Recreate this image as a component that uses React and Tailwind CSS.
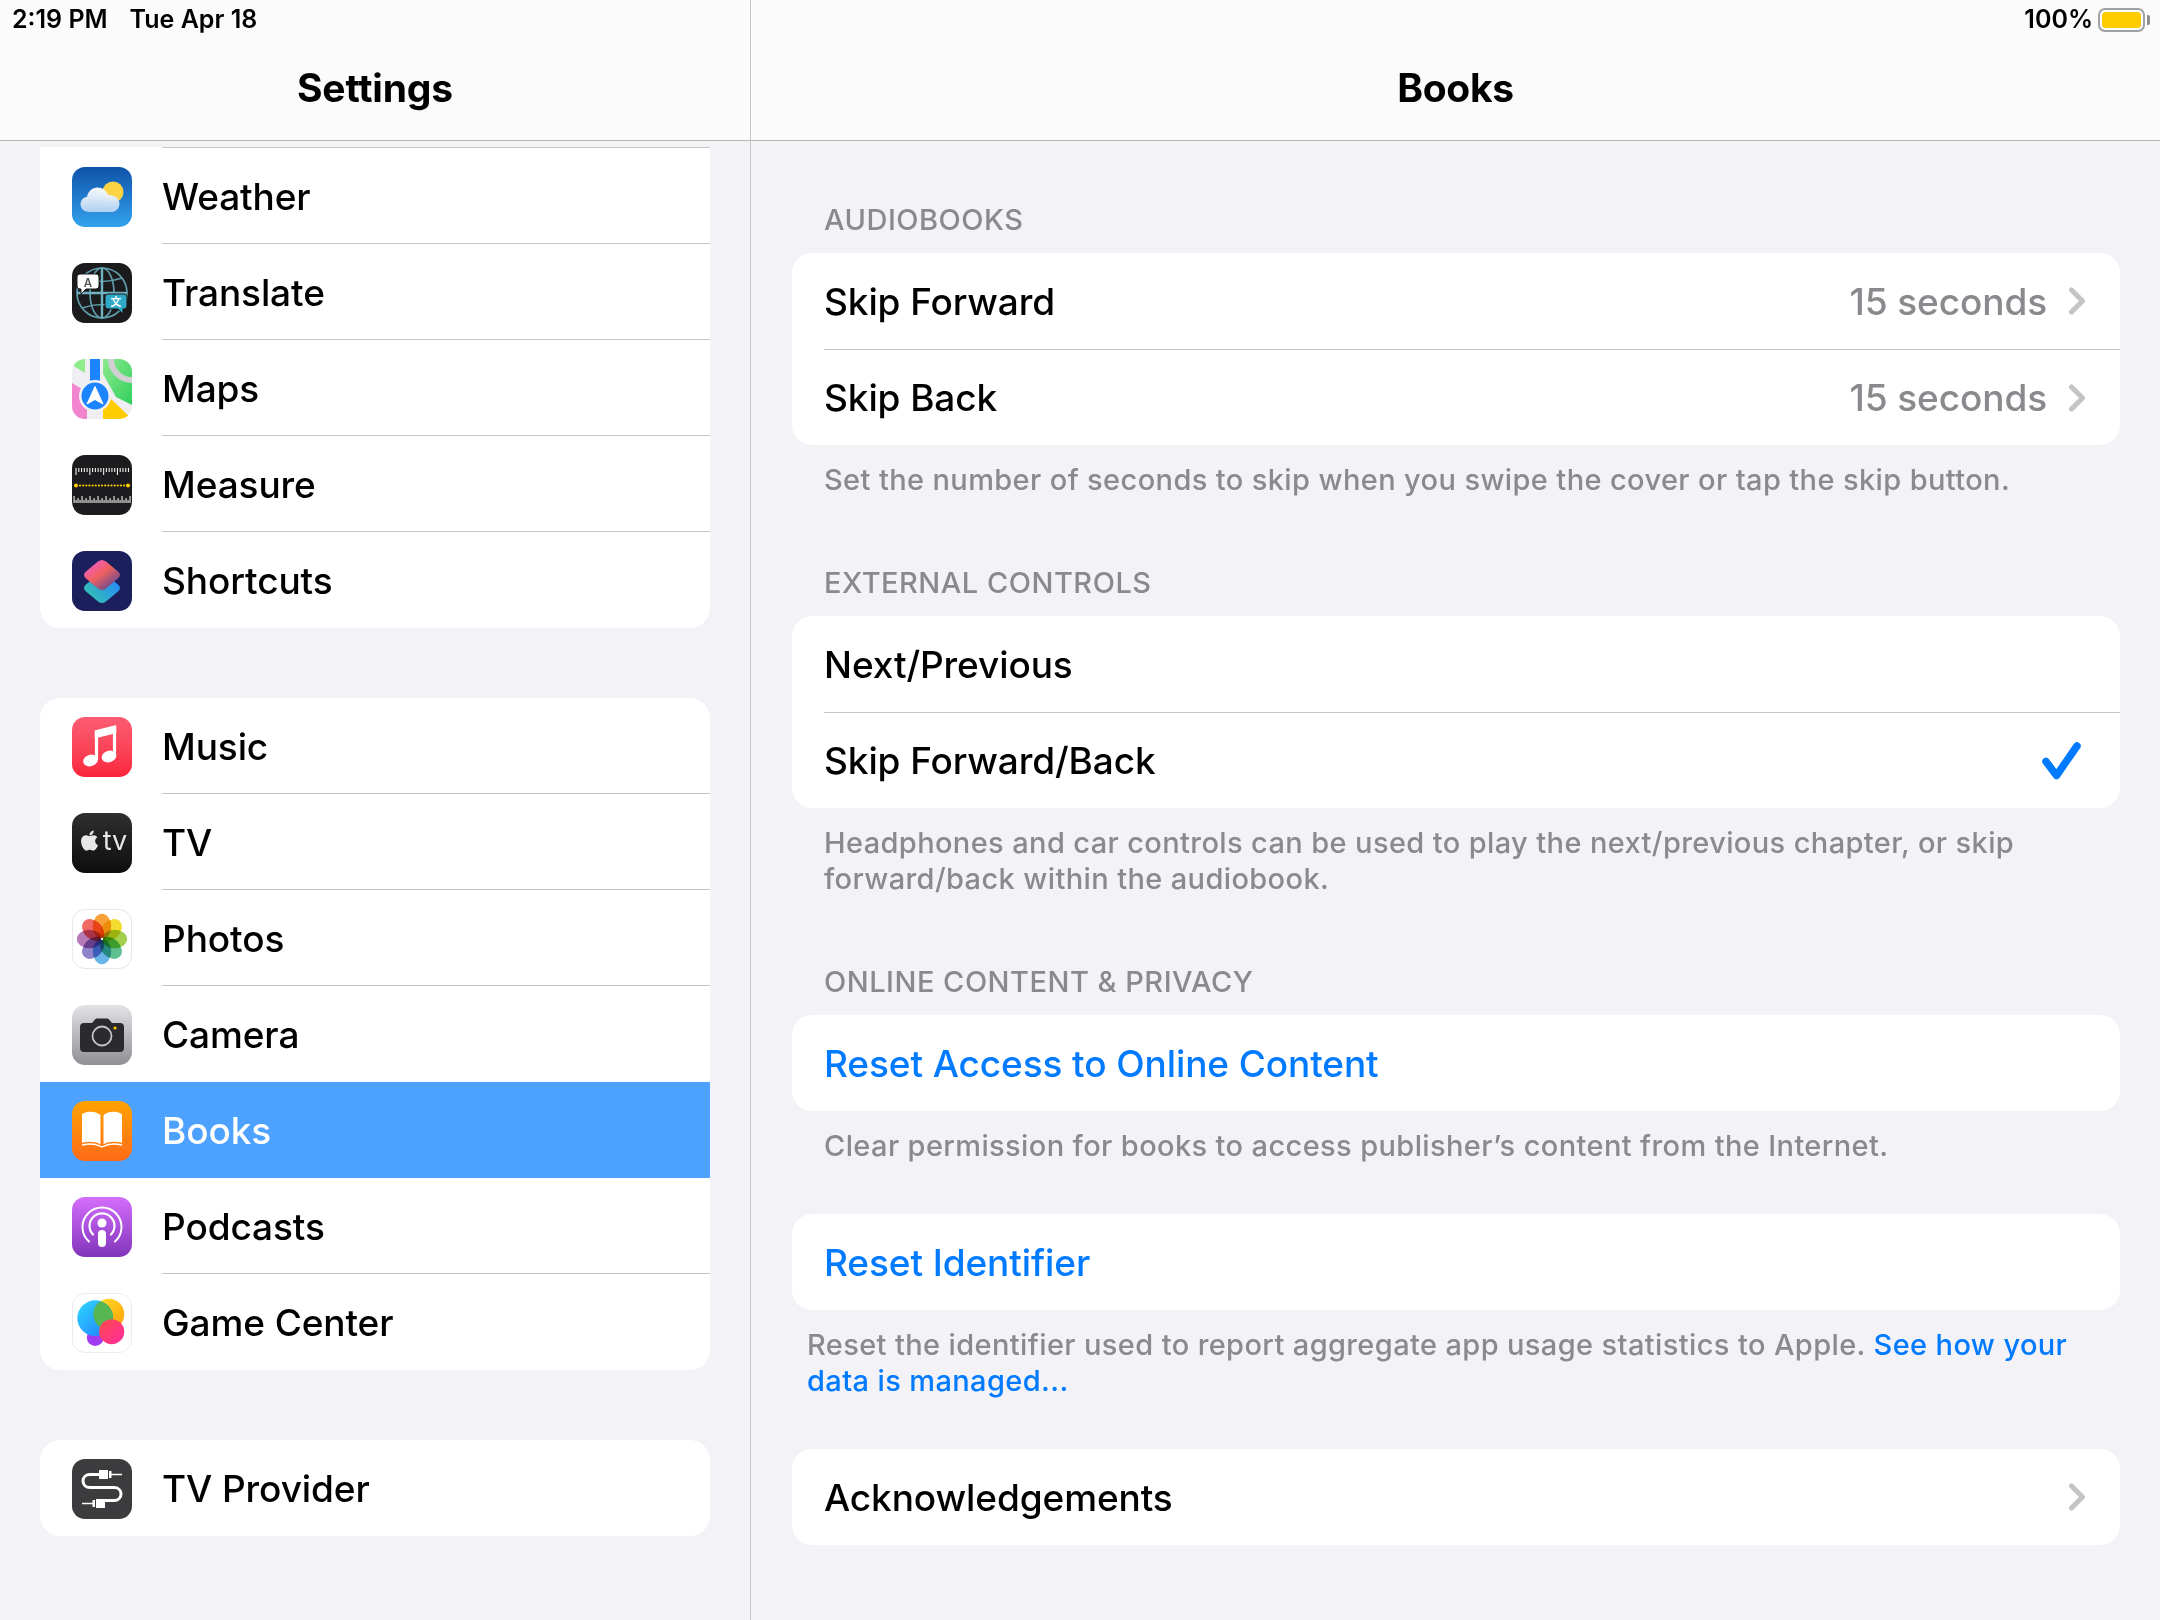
import React from "react";
import { FaApple } from "react-icons/fa";

const FONT = "font-['Inter','Liberation_Sans',sans-serif]";

function Tile({ children, className = "" }) {
  return <div className={`w-[60px] h-[60px] rounded-[13px] overflow-hidden shrink-0 ${className}`}>{children}</div>;
}
function S({ children }) {
  return <svg viewBox="0 0 60 60" width="60" height="60" className="block">{children}</svg>;
}

const Weather = () => (
  <Tile><S>
    <defs>
      <linearGradient id="wb" x1="0" y1="0" x2="0" y2="1"><stop offset="0" stopColor="#0f53ab" /><stop offset="1" stopColor="#33a2ec" /></linearGradient>
      <linearGradient id="wc" x1="0" y1="0" x2="0" y2="1"><stop offset="0" stopColor="#ffffff" stopOpacity=".97" /><stop offset="1" stopColor="#b5d2f1" stopOpacity=".97" /></linearGradient>
    </defs>
    <rect width="60" height="60" fill="url(#wb)" />
    <circle cx="41" cy="25" r="10.5" fill="#fbd344" />
    <path d="M17 45c-5 0-8.500-3.400-8.500-7.700 0-4 2.800-7 6.600-7.600C16 24.400 20.500 20.500 25.500 20.500c5 0 9 3 10.500 7.500 6.500-.5 11.500 3.500 11.500 8.700 0 4.800-3.800 8.300-8.500 8.300z" fill="url(#wc)" />
  </S></Tile>
);

const Translate = () => (
  <Tile><S>
    <rect width="60" height="60" fill="#1b1b1d" />
    <g fill="none" stroke="#5f9cab" strokeWidth="1.7">
      <circle cx="30" cy="30" r="25" />
      <ellipse cx="30" cy="30" rx="12" ry="25" />
      <path d="M10 15Q30 22 50 15M10 45Q30 38 50 45" />
    </g>
    <path d="M30 5v50M5 30h50" stroke="#6fb2c0" strokeWidth="2.400" />
    <path d="M8 11h16a3 3 0 0 1 3 3v9a3 3 0 0 1-3 3H14l-5 5v-5H8a3 3 0 0 1-3-3v-9a3 3 0 0 1 3-3z" fill="#fff" stroke="#1b1b1d" strokeWidth="1" />
    <text x="16" y="23.500" textAnchor="middle" fontSize="11.500" fontWeight="600" fill="#55585c" fontFamily="Inter, sans-serif">A</text>
    <path d="M36 31h16a3 3 0 0 1 3 3v9a3 3 0 0 1-3 3h-1v5l-5-5H36a3 3 0 0 1-3-3v-9a3 3 0 0 1 3-3z" fill="#2fa9c6" stroke="#1b1b1d" strokeWidth="1" />
    <text x="44" y="43" textAnchor="middle" fontSize="11" fontWeight="700" fill="#fff" fontFamily="'Noto Sans CJK SC', sans-serif">文</text>
  </S></Tile>
);

const Maps = () => (
  <Tile><S>
    <defs>
      <linearGradient id="mg" x1="0" y1="0" x2="1" y2="1"><stop offset="0" stopColor="#8ee98e" /><stop offset="1" stopColor="#2fd15c" /></linearGradient>
    </defs>
    <rect width="60" height="60" fill="#efeef3" />
    <path d="M0 0h13v14L0 6z" fill="#90ec8a" />
    <path d="M31 0h29v46L44 38 31 15z" fill="url(#mg)" />
    <circle cx="60" cy="0" r="21" fill="none" stroke="#d0d0d3" strokeWidth="6" />
    <path d="M0 24l15 9v27H0z" fill="#f285cd" />
    <path d="M31 60V46l8-6 21 20z" fill="#ffcc00" />
    <rect x="18" y="0" width="10" height="26" fill="#1d84ff" />
    <circle cx="23" cy="37" r="16" fill="#f2f2f5" />
    <circle cx="23" cy="37" r="13.500" fill="#1d84ff" />
    <path d="M23 27.500l8 17.500-8-4.500-8 4.500z" fill="#fff" strokeLinejoin="round" stroke="#fff" strokeWidth="1" />
  </S></Tile>
);

const topTicks = Array.from({ length: 20 }, (_, i) => i);
const botTicks = Array.from({ length: 29 }, (_, i) => i);
const dots = Array.from({ length: 15 }, (_, i) => i);
const Measure = () => (
  <Tile><S>
    <rect width="60" height="60" fill="#1c1c1e" />
    {topTicks.map((i) => (
      <rect key={i} x={3.500 + i * 2.760} y="13" width="1.100" height={i % 5 === 0 ? 7 : 4} fill="#f0f0f0" />
    ))}
    {botTicks.map((i) => (
      <rect key={i} x={1.500 + i * 2} y={i % 4 === 0 ? 41 : i % 2 === 0 ? 43 : 45} width="1.100" height={i % 4 === 0 ? 7 : i % 2 === 0 ? 5 : 3} fill="#f0f0f0" />
    ))}
    {dots.map((i) => (
      <circle key={i} cx={8 + i * 3.150} cy="30.500" r="1.100" fill="#ffcc00" />
    ))}
    <circle cx="4" cy="30.500" r="2" fill="#ffcc00" />
    <circle cx="56" cy="30.500" r="2" fill="#ffcc00" />
  </S></Tile>
);

const RH = "M26 9.500Q30 6.500 34 9.500L46 19.500Q50 23 46 26.500L34 36.500Q30 39.500 26 36.500L14 26.500Q10 23 14 19.500Z";
const Shortcuts = () => (
  <Tile><S>
    <defs>
      <linearGradient id="s1" x1="0.2" y1="0" x2="0.9" y2="0.8"><stop offset="0" stopColor="#f25ccb" /><stop offset=".5" stopColor="#f0605f" /><stop offset="1" stopColor="#6b4b8f" /></linearGradient>
      <linearGradient id="s2" x1="0" y1="1" x2="1" y2="0.3"><stop offset="0" stopColor="#39cba4" /><stop offset="1" stopColor="#2488fb" /></linearGradient>
    </defs>
    <rect width="60" height="60" fill="#1b205c" />
    <path d={RH} fill="url(#s2)" transform="translate(0 14)" />
    <path d={RH} fill="url(#s1)" transform="translate(0 1)" />
  </S></Tile>
);

const Music = () => (
  <Tile className="bg-gradient-to-b from-[#fb5c74] to-[#fa233b]"><S>
    <path d="M23.500 14L43.500 9V15.500L23.500 20.500z" fill="#fff" stroke="#fff" strokeWidth="1.500" strokeLinejoin="round" />
    <path d="M24.500 15V43M42.500 10V39" stroke="#fff" strokeWidth="3.200" fill="none" />
    <ellipse cx="18.500" cy="43.500" rx="7.400" ry="5.800" fill="#fff" transform="rotate(-15 18.500 43.500)" />
    <ellipse cx="37" cy="39.500" rx="7.400" ry="5.800" fill="#fff" transform="rotate(-15 37 39.500)" />
  </S></Tile>
);

const TVIcon = () => (
  <Tile className="bg-gradient-to-b from-[#2f2f31] to-[#0e0e0f] flex items-center justify-center gap-[2px] pl-[1px]">
    <FaApple size={23} color="#e8e8e8" className="-mt-[5px]" />
    <span className={`${FONT} text-[27px] leading-none text-[#e8e8e8] -mt-[5px]`}>tv</span>
  </Tile>
);

const petals = [
  ["#f7a13a", 0], ["#f5dc2e", 45], ["#a3cf4e", 90], ["#5ec08f", 135],
  ["#68b4e6", 180], ["#8f83c9", 225], ["#b67ab6", 270], ["#ee6a63", 315],
];
const Photos = () => (
  <Tile className="bg-white border border-[#e8e8ea]">
    <svg viewBox="0 0 60 60" width="58" height="58" className="block">
      <g style={{ isolation: "isolate" }}>
        {petals.map(([c, a]) => (
          <ellipse key={a} cx="30" cy="17" rx="9.500" ry="13" fill={c} transform={`rotate(${a} 30 30)`} style={{ mixBlendMode: "multiply" }} />
        ))}
      </g>
      <circle cx="30" cy="30" r="1.200" fill="#fff" />
    </svg>
  </Tile>
);

const Camera = () => (
  <Tile className="bg-gradient-to-b from-[#e4e4e8] to-[#8f8f94]"><S>
    <path d="M12 18h8l3-3.500c.6-.6 1.300-1 2-1h10c.8 0 1.500.4 2 1l3 3.500h8a4 4 0 0 1 4 4v21a4 4 0 0 1-4 4H12a4 4 0 0 1-4-4V22a4 4 0 0 1 4-4z" fill="#2b2b2d" />
    <circle cx="30" cy="31" r="9.500" fill="none" stroke="#c5c5c8" strokeWidth="1.800" />
    <circle cx="43" cy="23" r="1.600" fill="#ffcc00" />
  </S></Tile>
);

const Books = () => (
  <Tile className="bg-gradient-to-b from-[#ffa200] to-[#ff6a15]"><S>
    <path d="M12 12c4.500-1.800 11-1.800 15.500 1.300 .7.5 1 1 1 1.800v28.400c-3.800-2.700-10-3.700-18.500-1.800V14.300c0-1 .7-1.900 2-2.300z" fill="#fff" />
    <path d="M48 12c-4.500-1.800-11-1.800-15.500 1.300-.7.5-1 1-1 1.800v28.400c3.800-2.700 10-3.700 18.500-1.800V14.300c0-1-.7-1.900-2-2.300z" fill="#fff" />
    <path d="M10 44c6.500-1.500 13.500-1.200 18.500 1.400 1 .5 2 .5 3 0C36.500 42.800 43.500 42.500 50 44" fill="none" stroke="#fff" strokeWidth="1.400" />
  </S></Tile>
);

const Podcasts = () => (
  <Tile className="bg-gradient-to-b from-[#d56efc] to-[#8233bb]"><S>
    <g fill="none" stroke="#fff" strokeLinecap="round" strokeWidth="2">
      <path d="M17 44.500A19.500 19.500 0 1 1 43 44.500" />
      <path d="M21 37.500a12.500 12.500 0 1 1 18 0" strokeWidth="2.200" />
    </g>
    <circle cx="30" cy="26" r="4.500" fill="#fff" />
    <rect x="26" y="33" width="8" height="17" rx="4" fill="#fff" />
  </S></Tile>
);

const GameCenter = () => (
  <Tile className="bg-white border border-[#ececee]">
    <svg viewBox="0 0 60 60" width="58" height="58" className="block">
      <defs>
        <linearGradient id="g1" x1="0" y1="0" x2="1" y2="1"><stop offset="0" stopColor="#2fd8ff" /><stop offset="1" stopColor="#1f7bff" /></linearGradient>
        <linearGradient id="g2" x1="0" y1="0" x2="1" y2="1"><stop offset="0" stopColor="#ffe326" /><stop offset="1" stopColor="#ff9d0a" /></linearGradient>
        <linearGradient id="g3" x1="0" y1="0" x2="1" y2="1"><stop offset="0" stopColor="#ff4a4a" /><stop offset="1" stopColor="#ff2ba0" /></linearGradient>
        <clipPath id="gb"><circle cx="23" cy="25" r="18.500" /></clipPath>
      </defs>
      <circle cx="23" cy="45" r="8.700" fill="#a03bf0" />
      <circle cx="37" cy="21" r="16" fill="url(#g2)" />
      <circle cx="23" cy="25" r="18.500" fill="url(#g1)" />
      <circle cx="37" cy="21" r="16" fill="#55b652" clipPath="url(#gb)" />
      <circle cx="40" cy="39" r="13" fill="url(#g3)" />
    </svg>
  </Tile>
);

const TVProvider = () => (
  <Tile className="bg-[#3c3c3e]"><S>
    <g fill="none" stroke="#fff" strokeWidth="3">
      <path d="M27 15.500H18c-4 0-7 2.700-7 6.500s3 6.500 7 6.500h24c4 0 7 2.700 7 6.500s-3 6.500-7 6.500H33" />
      <path d="M39 15.500h11M10 44.500h11" strokeWidth="1.600" />
    </g>
    <rect x="27" y="11" width="9" height="9" fill="#fff" />
    <rect x="37" y="12" width="2.500" height="7" fill="#fff" />
    <rect x="24" y="40" width="9" height="9" fill="#fff" />
    <rect x="20.500" y="41" width="2.500" height="7" fill="#fff" />
  </S></Tile>
);

function Row({ icon: Icon, label, line, selected }) {
  return (
    <div className={`h-[96px] flex ${selected ? "bg-[#4da2ff]" : ""}`}>
      <div className="pl-[32px] pt-[19px] w-[122px] shrink-0"><Icon /></div>
      <div className={`flex-1 flex items-center pt-[1px] ${line ? "border-b border-[#c6c6c8]" : ""}`}>
        <span className={`text-[37px] leading-none font-medium tracking-[-0.1px] ${selected ? "text-white" : "text-black"}`}>{label}</span>
      </div>
    </div>
  );
}

function SideCard({ rows, className = "", children }) {
  return (
    <div className={`mx-[40px] bg-white overflow-hidden ${className}`}>
      {children}
      {rows.map((r) => <Row key={r.label} {...r} />)}
    </div>
  );
}

const Chevron = () => (
  <svg width="18" height="28" viewBox="0 0 18 28" className="shrink-0">
    <path d="M3.500 3L14.500 14 3.500 25" fill="none" stroke="#c4c4c7" strokeWidth="5" strokeLinecap="round" strokeLinejoin="round" />
  </svg>
);

function Card({ children, className = "" }) {
  return <div className={`mx-[40px] ml-[41px] bg-white rounded-[20px] ${className}`}>{children}</div>;
}

function DRow({ label, value, chevron, check, divider, blue }) {
  return (
    <div className="h-[96px] pl-[32px]">
      <div className={`h-full pr-[34px] flex items-center justify-between ${divider ? "border-t border-[#c6c6c8]" : ""}`}>
        <span className={`text-[37px] leading-none font-medium tracking-[-0.1px] ${blue ? "text-[#007aff]" : "text-black"}`}>{label}</span>
        <div className="flex items-center gap-[21px]">
          {value && <span className="text-[37px] leading-none font-medium tracking-[-0.1px] text-[#8a8a8e]">{value}</span>}
          {chevron && <Chevron />}
          {check && (
            <svg width="40" height="40" viewBox="0 0 40 40" className="mr-[5px]">
              <path d="M5 20.500L15.500 34.500 36 5" fill="none" stroke="#007aff" strokeWidth="7.500" strokeLinecap="round" strokeLinejoin="round" />
            </svg>
          )}
        </div>
      </div>
    </div>
  );
}

const Label = ({ children, className = "" }) => (
  <div className={`ml-[73px] h-[34px] mb-[16px] text-[29px] leading-[34px] font-medium tracking-[0.5px] text-[#8a8a8e] ${className}`}>{children}</div>
);
const Note = ({ children, className = "" }) => (
  <div className={`text-[29px] leading-[36px] font-medium tracking-[0.38px] text-[#8a8a8e] mt-[17px] ${className}`}>{children}</div>
);

export default function App() {
  return (
    <div className={`${FONT} w-[2160px] h-[1620px] bg-[#f2f2f7] flex overflow-hidden`}>
      <aside className="w-[751px] shrink-0 border-r border-[#c6c6c8]">
        <header className="h-[141px] bg-[#fbfbfb] border-b border-[#b4b4b6]">
          <div className="flex gap-[22px] pl-[12px] pt-[4px] h-[34px] text-[25px] leading-[30px] font-semibold text-black">
            <span>2:19 PM</span><span>Tue Apr 18</span>
          </div>
          <h1 className="text-center text-[39px] leading-[44px] font-bold tracking-[-0.15px] mt-[32px] text-black">Settings</h1>
        </header>
        <div className="pt-[6px]">
          <SideCard
            className="rounded-b-[20px]"
            rows={[
              { icon: Weather, label: "Weather", line: true },
              { icon: Translate, label: "Translate", line: true },
              { icon: Maps, label: "Maps", line: true },
              { icon: Measure, label: "Measure", line: true },
              { icon: Shortcuts, label: "Shortcuts" },
            ]}
          >
            <div className="ml-[122px] h-[1px] bg-[#c6c6c8]" />
          </SideCard>
          <SideCard
            className="rounded-[20px] mt-[70px]"
            rows={[
              { icon: Music, label: "Music", line: true },
              { icon: TVIcon, label: "TV", line: true },
              { icon: Photos, label: "Photos", line: true },
              { icon: Camera, label: "Camera" },
              { icon: Books, label: "Books", selected: true },
              { icon: Podcasts, label: "Podcasts", line: true },
              { icon: GameCenter, label: "Game Center" },
            ]}
          />
          <SideCard className="rounded-[20px] mt-[70px]" rows={[{ icon: TVProvider, label: "TV Provider" }]} />
        </div>
      </aside>
      <main className="flex-1 min-w-0">
        <header className="h-[141px] bg-[#fbfbfb] border-b border-[#b4b4b6]">
          <div className="flex items-start justify-end pr-[10px] pt-[4px] h-[34px] gap-[5px]">
            <span className="text-[25px] leading-[30px] font-semibold text-black">100%</span>
            <div className="flex items-center mt-[4px]">
              <div className="w-[47px] h-[24px] rounded-[7px] border-2 border-[#a2a2a4] p-[2px]">
                <div className="w-full h-full rounded-[3.500px] bg-[#ffcc00]" />
              </div>
              <div className="w-[3px] h-[10px] ml-[2px] rounded-r-[2px] bg-[#8e8e90]" />
            </div>
          </div>
          <h1 className="text-center text-[39px] leading-[44px] font-bold tracking-[-0.3px] mt-[32px] text-black">Books</h1>
        </header>

        <Label className="mt-[62px]">AUDIOBOOKS</Label>
        <Card>
          <DRow label="Skip Forward" value="15 seconds" chevron />
          <DRow label="Skip Back" value="15 seconds" chevron divider />
        </Card>
        <Note className="ml-[73px]">Set the number of seconds to skip when you swipe the cover or tap the skip button.</Note>

        <Label className="mt-[68px]">EXTERNAL CONTROLS</Label>
        <Card>
          <DRow label="Next/Previous" />
          <DRow label="Skip Forward/Back" check divider />
        </Card>
        <Note className="ml-[73px]">
          Headphones and car controls can be used to play the next/previous chapter, or skip<br />
          forward/back within the audiobook.
        </Note>

        <Label className="mt-[68px]">ONLINE CONTENT &amp; PRIVACY</Label>
        <Card><DRow label="Reset Access to Online Content" blue /></Card>
        <Note className="ml-[73px]">Clear permission for books to access publisher’s content from the Internet.</Note>

        <Card className="mt-[50px]"><DRow label="Reset Identifier" blue /></Card>
        <Note className="ml-[56px]">
          Reset the identifier used to report aggregate app usage statistics to Apple. <span className="text-[#007aff]">See how your<br />data is managed...</span>
        </Note>

        <Card className="mt-[50px]"><DRow label="Acknowledgements" chevron /></Card>
      </main>
    </div>
  );
}
